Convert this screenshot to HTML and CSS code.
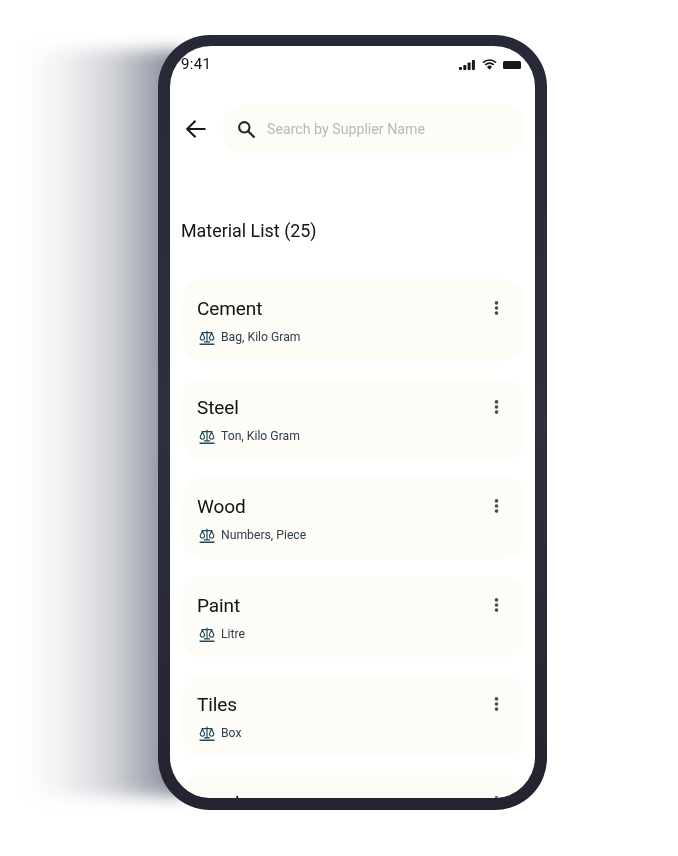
FILE: index.html
```html
<!DOCTYPE html>
<html lang="en">
<head>
<meta charset="utf-8">
<title>Material List</title>
<link rel="stylesheet" href="styles.css">
</head>
<body>
<svg class="defs" width="0" height="0" aria-hidden="true">
  <symbol id="scale" viewBox="0 0 16 15">
    <path d="M8 .8v11.6M2.5 2.6h11M5 11.8h6" fill="none" stroke="currentColor" stroke-width="1.2"/>
    <path d="M3.4 3 1.2 7.6a2.2 2.6 0 0 0 4.4 0ZM12.6 3l-2.2 4.6a2.2 2.6 0 0 0 4.4 0Z" fill="none" stroke="currentColor" stroke-width="1.1"/>
    <path d="M.6 14.2h14.8" fill="none" stroke="currentColor" stroke-width="1.4"/>
  </symbol>
  <symbol id="dots" viewBox="0 0 5 14">
    <circle cx="2.5" cy="1.9" r="1.8"/><circle cx="2.5" cy="7" r="1.8"/><circle cx="2.5" cy="12.1" r="1.8"/>
  </symbol>
</svg>
<main class="stage">
  <div class="shadow"></div>
  <div class="phone">
    <div class="screen">
      <div class="status">
        <span class="time">9:41</span>
        <span class="status-icons">
          <svg width="16" height="10" viewBox="0 0 16 10"><rect x="0" y="7" width="3" height="3" rx=".8"/><rect x="4.3" y="5" width="3" height="5" rx=".8"/><rect x="8.6" y="2.5" width="3" height="7.5" rx=".8"/><rect x="12.9" y="0" width="3" height="10" rx=".8"/></svg>
          <svg width="15" height="11" viewBox="0 0 15 11"><path d="M1 3.6a9.3 9.3 0 0 1 13 0M3.2 5.9a6.2 6.2 0 0 1 8.6 0" fill="none" stroke="currentColor" stroke-width="1.6"/><path d="M5 7.7a3.6 3.6 0 0 1 5 0l-2.5 3z"/></svg>
          <svg width="18" height="8" viewBox="0 0 18 8"><rect width="18" height="8" rx="1.6"/></svg>
        </span>
      </div>
      <div class="topbar">
        <svg class="back" width="22" height="20" viewBox="0 0 22 20"><path d="M20.5 10H2.5M10.5 1.8 2.2 10l8.3 8.2" fill="none" stroke="currentColor" stroke-width="2.1"/></svg>
        <div class="search">
          <svg class="search-icon" width="19" height="19" viewBox="0 0 19 19"><circle cx="7.3" cy="7.3" r="5.2" fill="none" stroke="currentColor" stroke-width="2.1"/><path d="m11.2 11.2 6.3 6.3" fill="none" stroke="currentColor" stroke-width="2.3"/></svg>
          <span class="placeholder">Search by Supplier Name</span>
        </div>
      </div>
      <h1 class="title">Material List (25)</h1>
      <div class="list">
        <article class="card"><div class="card-text"><h2 class="name">Cement</h2><p class="unit"><svg class="scale"><use href="#scale"/></svg>Bag, Kilo Gram</p></div><svg class="dots"><use href="#dots"/></svg></article>
        <article class="card"><div class="card-text"><h2 class="name">Steel</h2><p class="unit"><svg class="scale"><use href="#scale"/></svg>Ton, Kilo Gram</p></div><svg class="dots"><use href="#dots"/></svg></article>
        <article class="card"><div class="card-text"><h2 class="name">Wood</h2><p class="unit"><svg class="scale"><use href="#scale"/></svg>Numbers, Piece</p></div><svg class="dots"><use href="#dots"/></svg></article>
        <article class="card"><div class="card-text"><h2 class="name">Paint</h2><p class="unit"><svg class="scale"><use href="#scale"/></svg>Litre</p></div><svg class="dots"><use href="#dots"/></svg></article>
        <article class="card"><div class="card-text"><h2 class="name">Tiles</h2><p class="unit"><svg class="scale"><use href="#scale"/></svg>Box</p></div><svg class="dots"><use href="#dots"/></svg></article>
        <article class="card"><div class="card-text"><h2 class="name">Sand</h2></div><svg class="dots"><use href="#dots"/></svg></article>
      </div>
    </div>
  </div>
</main>
</body>
</html>
```

FILE: styles.css
```css
* { box-sizing: border-box; }
html, body { margin: 0; height: 856px; overflow: hidden; background: #fff; }
body { font-family: "Roboto", "Liberation Sans", sans-serif; color: #141416; }
.defs { position: absolute; }
.stage { position: relative; height: 856px; padding: 35px 0 0 158px; }
.shadow {
  position: absolute; left: 22px; top: 50px; width: 160px; height: 746px;
  background: linear-gradient(to right, rgba(120,125,140,0) 0%, rgba(120,125,140,.1) 25%, rgba(120,125,140,.32) 55%, rgba(110,115,132,.72) 88%, rgba(95,100,118,.85) 100%);
  filter: blur(8px);
}
.phone {
  position: relative; width: 389px; height: 775px; padding: 11px 12px 12px 12px;
  background: linear-gradient(to bottom, #282936, #2f303e 50%, #23242f); border-radius: 52px;
}
.screen { height: 752px; border-radius: 41px; background: #fff; overflow: hidden; filter: blur(.4px); }
.status { display: flex; justify-content: space-between; align-items: center; height: 35px; padding: 2px 14px 0 11px; }
.time { font-size: 15px; line-height: 33px; letter-spacing: .3px; }
.status-icons { display: flex; align-items: center; gap: 6.5px; color: #17171c; fill: #17171c; }
.topbar { display: flex; align-items: center; gap: 17px; padding: 25px 12px 0 15px; }
.back { flex: none; color: #17171c; }
.search { flex: 1; height: 46px; display: flex; align-items: center; gap: 11px; padding-left: 13px; background: #fdfcf6; border-radius: 14px; box-shadow: 0 0 4px #fdfcf6; }
.search-icon { color: #26262b; }
.placeholder { font-size: 14.2px; color: #b8b8b8; }
.title { margin: 68px 0 0 11px; font-size: 17.9px; line-height: 22px; font-weight: 400; }
.list { display: flex; flex-direction: column; gap: 19px; padding: 38px 12px 0 13px; }
.card { flex: none; height: 80px; display: flex; justify-content: space-between; padding: 18px 24px 0 14px; background: #fdfcf6; border-radius: 18px; box-shadow: 0 0 4px #fdfcf6; }
.name { margin: 0; font-size: 19px; line-height: 22px; font-weight: 400; letter-spacing: -.1px; }
.unit { display: flex; align-items: center; gap: 6px; margin: 9px 0 0 2px; font-size: 12.2px; line-height: 16px; color: #2f4050; }
.scale { width: 16px; height: 15px; color: #1f4a5c; }
.dots { width: 5px; height: 14px; margin-top: 3px; fill: #4a4a50; }
```
